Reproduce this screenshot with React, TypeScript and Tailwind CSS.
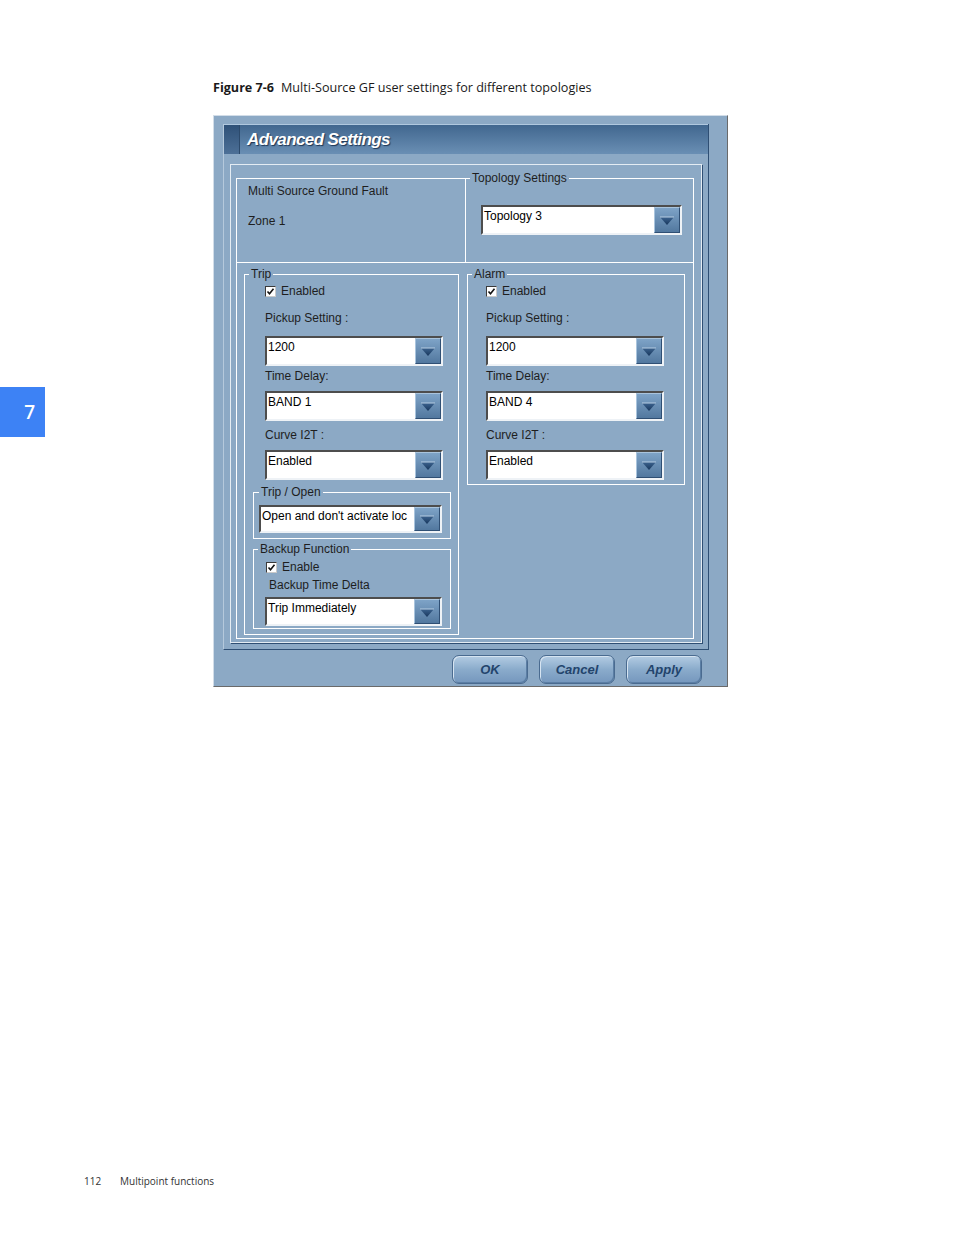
import React from "react";

const UI = { fontFamily: '"Liberation Sans", Arial, sans-serif' };
const DOC = { fontFamily: '"Open Sans", "Noto Sans", sans-serif' };

function Arrow() {
  return (
    <svg width="16" height="10" viewBox="0 0 16 10">
      <defs>
        <linearGradient id="tri" x1="0" y1="0" x2="0" y2="1">
          <stop offset="0" stopColor="#3d6490" />
          <stop offset="1" stopColor="#17365c" />
        </linearGradient>
      </defs>
      <polygon points="1,1 15,1 8,9" fill="url(#tri)" />
      <polyline points="1,1 15,1" stroke="#b7cde2" strokeWidth="1" fill="none" />
    </svg>
  );
}

function Combo({ value, className }: { value: string; className: string }) {
  return (
    <div
      className={`flex bg-white border-2 border-t-[#4d4d4d] border-l-[#4d4d4d] border-b-[#eef2f6] border-r-[#eef2f6] ${className}`}
    >
      <span className="flex-1 overflow-hidden whitespace-nowrap pl-[1px] pt-[2px] text-[12px] leading-[14px] text-black">
        {value}
      </span>
      <div className="w-[26px] h-full flex items-center justify-center pt-[2px] bg-gradient-to-b from-[#7ea3c7] to-[#52789f] border border-t-[#a9c4dd] border-l-[#a9c4dd] border-b-[#2f4f74] border-r-[#2f4f74]">
        <Arrow />
      </div>
    </div>
  );
}

function Check({ label, className }: { label: string; className: string }) {
  return (
    <div className={`flex items-center h-[14px] gap-[5px] ${className}`}>
      <div className="w-[11px] h-[11px] bg-white border border-t-[#3a3a3a] border-l-[#3a3a3a] border-b-[#c9c9c9] border-r-[#c9c9c9] flex items-center justify-center">
        <svg width="9" height="9" viewBox="0 0 9 9">
          <polyline points="1.5,4.5 3.5,6.8 7.5,1.8" stroke="#111" strokeWidth="1.6" fill="none" />
        </svg>
      </div>
      <span className="text-[12px] leading-[14px] text-[#1e1e1e]">{label}</span>
    </div>
  );
}

function Label({ text, className }: { text: string; className: string }) {
  return (
    <div className={`h-[14px] text-[12px] leading-[14px] text-[#1e1e1e] whitespace-nowrap ${className}`}>
      {text}
    </div>
  );
}

function Legend({ text, className }: { text: string; className: string }) {
  return (
    <legend className={`px-[2px] h-[14px] text-[12px] leading-[14px] text-[#1e1e1e] ${className}`}>
      {text}
    </legend>
  );
}

function SettingsColumn({ indent, values }: { indent: string; values: string[] }) {
  return (
    <>
      <Check label="Enabled" className={`mt-[3px] ${indent}`} />
      <Label text="Pickup Setting :" className={`mt-[13px] ${indent}`} />
      <Combo value={values[0]} className={`mt-[11px] ${indent} w-[178px] h-[30px]`} />
      <Label text="Time Delay:" className={`mt-[3px] ${indent}`} />
      <Combo value={values[1]} className={`mt-[8px] ${indent} w-[178px] h-[30px]`} />
      <Label text="Curve I2T :" className={`mt-[7px] ${indent}`} />
      <Combo value={values[2]} className={`mt-[8px] ${indent} w-[178px] h-[30px]`} />
    </>
  );
}

function Btn({ label }: { label: string }) {
  return (
    <button className="w-[76px] h-[29px] rounded-[7px] border border-[#4a6b90] bg-gradient-to-b from-[#b3cce3] via-[#8aabcb] to-[#7597bd] shadow-[inset_1px_1px_0_#d6e4f1,inset_-1px_-1px_0_#5b7ea4] text-[13px] font-bold italic text-[#23446c]">
      {label}
    </button>
  );
}

function Dialog() {
  return (
    <div
      style={UI}
      className="mt-[18px] w-[515px] h-[572px] flex flex-col pl-[9px] pt-[8px] bg-[#8ca9c5] border border-t-[#d2dde8] border-l-[#d2dde8] border-b-[#6a6a6a] border-r-[#6a6a6a]"
    >
      {/* frame */}
      <div className="w-[486px] flex flex-col pb-[6px] border-l border-r border-b border-l-[#b5c9dc] border-r-[#2f4f74] border-b-[#2f4f74]">
        <div className="h-[30px] flex border-t border-t-[#b0c8df] bg-gradient-to-b from-[#41678f] to-[#6a8fb4]">
          <div className="w-[16px] bg-gradient-to-b from-[#2f5178] to-[#4d7097] border-r border-r-[#2c4a6c]" />
          <span className="ml-[7px] self-center text-[17px] font-bold italic tracking-[-0.6px] text-white [text-shadow:1px_1px_1px_#1d3553]">
            Advanced Settings
          </span>
        </div>

        {/* group box */}
        <div className="mt-[10px] ml-[6px] w-[472px] h-[479px] pl-[5px] pt-[6px] border border-[#e4ecf3] shadow-[1px_1px_0_#2f4f74]">
          <div className="w-[458px] flex flex-col">
            <div className="flex h-[91px]">
              <div className="mt-[7px] w-[229px] border-t border-l border-white flex flex-col">
                <Label text="Multi Source Ground Fault" className="mt-[5px] ml-[11px]" />
                <Label text="Zone 1" className="mt-[16px] ml-[11px]" />
              </div>
              <fieldset className="w-[229px] border-t border-l border-r border-white flex flex-col">
                <Legend text="Topology Settings" className="ml-[4px]" />
                <Combo value="Topology 3" className="mt-[20px] ml-[15px] w-[201px] h-[30px]" />
              </fieldset>
            </div>

            <div className="h-[377px] flex items-start gap-[8px] pl-[7px] pt-[4px] border border-white">
              <fieldset className="w-[215px] h-[368px] border border-white flex flex-col">
                <Legend text="Trip" className="ml-[4px]" />
                <SettingsColumn indent="ml-[20px]" values={["1200", "BAND 1", "Enabled"]} />
                <fieldset className="mt-[5px] ml-[8px] w-[198px] h-[54px] border border-white flex flex-col">
                  <Legend text="Trip / Open" className="ml-[5px]" />
                  <Combo
                    value="Open and  don't activate loc"
                    className="mt-[6px] ml-[5px] w-[183px] h-[28px]"
                  />
                </fieldset>
                <fieldset className="mt-[3px] ml-[8px] w-[198px] h-[87px] border border-white flex flex-col">
                  <Legend text="Backup Function" className="ml-[4px]" />
                  <Check label="Enable" className="mt-[4px] ml-[12px]" />
                  <Label text="Backup Time Delta" className="mt-[4px] ml-[15px]" />
                  <Combo value="Trip Immediately" className="mt-[5px] ml-[11px] w-[177px] h-[29px]" />
                </fieldset>
              </fieldset>

              <fieldset className="w-[218px] h-[218px] border border-white flex flex-col">
                <Legend text="Alarm" className="ml-[4px]" />
                <SettingsColumn indent="ml-[18px]" values={["1200", "BAND 4", "Enabled"]} />
              </fieldset>
            </div>
          </div>
        </div>
      </div>

      <div className="mt-[5px] flex gap-[11px] pl-[229px]">
        <Btn label="OK" />
        <Btn label="Cancel" />
        <Btn label="Apply" />
      </div>
    </div>
  );
}

export default function App() {
  return (
    <div className="w-[954px] h-[1235px] bg-white flex flex-col" style={DOC}>
      <div className="flex">
        <div className="w-[45px] pt-[387px]">
          <div className="h-[50px] bg-[#3d82f5] flex items-center justify-end pr-[10px] text-white text-[19px] font-semibold">
            7
          </div>
        </div>
        <div className="ml-[168px] pt-[79px] flex flex-col">
          <p className="h-[18px] leading-[18px] text-[12.6px] text-[#1a1a1a] whitespace-nowrap">
            <span className="font-bold">Figure 7-6</span>
            <span className="ml-[7px]">Multi-Source GF user settings for different topologies</span>
          </p>
          <Dialog />
        </div>
      </div>
      <footer className="mt-auto pb-[47px] pl-[84px] flex h-[61px] items-end text-[10px] leading-[14px] text-[#333]">
        <span className="w-[36px]">112</span>
        <span>Multipoint functions</span>
      </footer>
    </div>
  );
}
